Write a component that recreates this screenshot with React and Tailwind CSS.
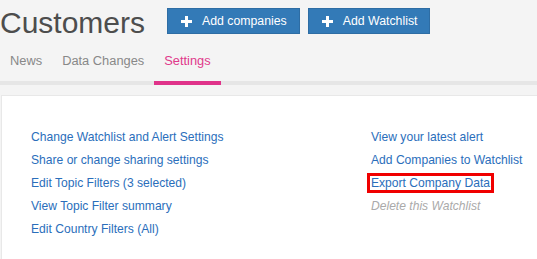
import React from "react";

function Plus() {
  return (
    <svg width="11" height="11" viewBox="0 0 11 11" className="shrink-0">
      <rect x="0" y="4" width="11" height="3" fill="#fff" />
      <rect x="4" y="0" width="3" height="11" fill="#fff" />
    </svg>
  );
}

function Btn({ children }) {
  return (
    <button className="flex items-center h-[26px] pl-[13px] pr-[12px] bg-[#337ab7] border border-[#2e6da4] text-white text-[12.3px] leading-[14px] gap-[10px]">
      <Plus />
      <span>{children}</span>
    </button>
  );
}

export default function App() {
  const left = [
    "Change Watchlist and Alert Settings",
    "Share or change sharing settings",
    "Edit Topic Filters (3 selected)",
    "View Topic Filter summary",
    "Edit Country Filters (All)",
  ];
  return (
    <div
      className="w-[537px] h-[259px] overflow-hidden bg-[#f4f4f4]"
      style={{ fontFamily: '"Liberation Sans", Arial, sans-serif' }}
    >
      <div className="flex items-start h-[46px]">
        <h1 className="text-[30px] leading-[46px] text-[#4d4d4d] font-normal w-[167px]">
          Customers
        </h1>
        <div className="flex gap-[8px] mt-[8px]">
          <Btn>Add companies</Btn>
          <Btn>Add Watchlist</Btn>
        </div>
      </div>
      <div className="flex border-b-4 border-[#e6e6e6]">
        <div className="px-[10px] pt-[6px] pb-[11px] leading-[18px] text-[12.85px] text-[#888] -mb-[4px] border-b-4 border-transparent">
          News
        </div>
        <div className="px-[10px] pt-[6px] pb-[11px] leading-[18px] text-[12.85px] text-[#888] -mb-[4px] border-b-4 border-transparent">
          Data Changes
        </div>
        <div className="px-[10px] pt-[6px] pb-[11px] leading-[18px] text-[12.85px] text-[#e0398b] -mb-[4px] border-b-4 border-[#e0338a]">
          Settings
        </div>
      </div>
      <div className="mt-[10px] ml-[1px] bg-white border-t border-l border-[#e8e8e8] h-[200px] pt-[30px] pl-[29px] flex text-[12.1px] leading-[23px]">
        <ul className="w-[340px]">
          {left.map((t) => (
            <li key={t}>
              <a className="text-[#2a6ebb]">{t}</a>
            </li>
          ))}
        </ul>
        <ul>
          <li>
            <a className="text-[#2a6ebb]">View your latest alert</a>
          </li>
          <li>
            <a className="text-[#2a6ebb]">Add Companies to Watchlist</a>
          </li>
          <li>
            <a className="text-[#2a6ebb] border-[3px] border-[#f00000] -ml-[4px] pl-[1px] pr-[1px]">
              Export Company Data
            </a>
          </li>
          <li>
            <a className="text-[#aaaaaa] italic">Delete this Watchlist</a>
          </li>
        </ul>
      </div>
    </div>
  );
}
